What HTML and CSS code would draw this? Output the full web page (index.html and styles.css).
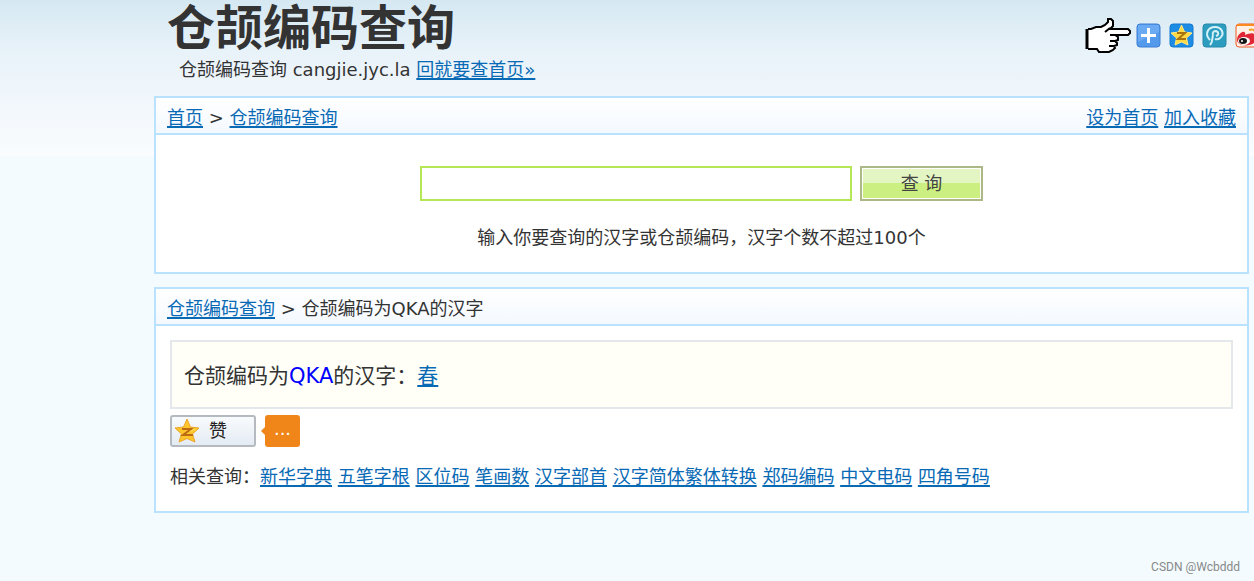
FILE: index.html
```
<!DOCTYPE html>
<html lang="zh">
<head>
    <meta charset="UTF-8">
    <meta name="viewport" content="width=device-width, initial-scale=1.0">
    <title>仓颉编码查询</title>
    <link rel="stylesheet" href="styles.css">
</head>
<body>
    <div class="page">
        <header class="header">
            <div class="brand">
                <h1>仓颉编码查询</h1>
                <p>仓颉编码查询 cangjie.jyc.la <a href="#">回就要查首页»</a></p>
            </div>
            <div class="share">
                <svg class="hand" viewBox="0 0 46 36" aria-hidden="true">
                    <path d="M3 12H6L11 10H16L20 8L23 5V2H26L28 4V9L25 12H43L45 14V16L43 18H30L33 20V23L30 24L32 26V28L29 29L31 31V33L28 34L14 35L12 32H3Z" fill="#fff"/>
                    <path d="M3 12H6L11 10H16L20 8L23 5V2H26L28 4V9L25 12H43L45 14V16L43 18H25M30 18L33 20V23L30 24H25M30 24L32 26V28L29 29H24M29 29L30 31L28 33L24 35H14L12 32H3" fill="none" stroke="#000" stroke-width="2"/>
                    <path d="M2 12V32" fill="none" stroke="#000" stroke-width="3"/>
                    <path d="M25 11L20 15" fill="none" stroke="#000" stroke-width="2"/>
                </svg>
                <a href="#" aria-label="分享">
                    <svg viewBox="0 0 25 25">
                        <rect x="1" y="1" width="23" height="23" rx="3" fill="#539aec" stroke="#3d7ed3"/>
                        <path d="M2 2H23V9L2 19Z" fill="#6aaaf2"/>
                        <path d="M12.500 5V20M5 12.500H20" stroke="#fff" stroke-width="3"/>
                    </svg>
                </a>
                <a href="#" aria-label="QQ空间">
                    <svg viewBox="0 0 25 25">
                        <rect x="1" y="1" width="23" height="23" rx="3" fill="#1d8ce4" stroke="#1678cf"/>
                        <path d="M12.500 2L15.500 9L23 10L17.500 15L19 22L12.500 19L6 22L7.500 15L2 10L9.500 9Z" fill="#ffd944" stroke="#ffe884"/>
                        <path d="M8 10H16L9 16H17" fill="none" stroke="#a87211" stroke-width="2"/>
                    </svg>
                </a>
                <a href="#" aria-label="腾讯朋友">
                    <svg viewBox="0 0 25 25">
                        <rect x="1" y="1" width="23" height="23" rx="3" fill="#2c9dbf" stroke="#2489ab"/>
                        <path d="M8 17C2 11 6 4 13 4C20 4 23 11 18 15C16 17 13 16 13 16M8 22C11 19 10 15 11 12" fill="none" stroke="#d4f1f7" stroke-width="2"/>
                        <path d="M11 12C10 9 12 8 14 8C17 9 17 12 14 13" fill="none" stroke="#d4f1f7" stroke-width="2"/>
                    </svg>
                </a>
                <a href="#" aria-label="新浪微博">
                    <svg viewBox="0 0 25 25">
                        <rect x="1" y="1" width="23" height="23" rx="3" fill="#fff1e5" stroke="#ed5b24"/>
                        <path d="M2 2H23" stroke="#ff8a1f" stroke-width="2"/>
                        <path d="M2 17C2 12 7 8 9 9C11 9 10 12 10 12C15 10 20 9 19 13C23 14 22 18 19 20C14 24 2 23 2 17Z" fill="#e02735"/>
                        <ellipse cx="9" cy="18" rx="6" ry="4" fill="#fff"/>
                        <ellipse cx="8" cy="18" rx="4" ry="3" fill="#151515"/>
                        <circle cx="7" cy="18" r="1" fill="#fff"/>
                        <path d="M14 7C19 5 22 9 20 14" fill="none" stroke="#f7a229" stroke-width="2"/>
                    </svg>
                </a>
            </div>
        </header>

        <section class="panel">
            <div class="panel-head">
                <div><a href="#">首页</a> &gt; <a href="#">仓颉编码查询</a></div>
                <div><a href="#">设为首页</a> <a href="#">加入收藏</a></div>
            </div>
            <form class="search">
                <div class="search-row">
                    <input type="text" id="q" aria-label="汉字或仓颉编码">
                    <button type="submit">查 询</button>
                </div>
                <label for="q">输入你要查询的汉字或仓颉编码，汉字个数不超过100个</label>
            </form>
        </section>

        <section class="panel">
            <div class="panel-head">
                <div><a href="#">仓颉编码查询</a> &gt; 仓颉编码为QKA的汉字</div>
            </div>
            <div class="content">
                <div class="result">仓颉编码为<span class="code">QKA</span>的汉字：<a href="#">春</a></div>
                <div class="like">
                    <button type="button" class="like-btn">
                        <svg viewBox="0 0 26 26" aria-hidden="true">
                            <path d="M13 1L16.500 9L25 10L18.500 16L21 24L13 20.500L5 24L7.500 16L1 10L9.500 9Z" fill="#ffc52b" stroke="#eda62b"/>
                            <path d="M13 3L15 10L23 11L16 14Z" fill="#ffdc57"/>
                            <path d="M8 11H17L9 17H19" fill="none" stroke="#bd6b12" stroke-width="2"/>
                        </svg>
                        赞
                    </button>
                    <span class="bubble">...</span>
                </div>
                <div class="related">相关查询：<a href="#">新华字典</a> <a href="#">五笔字根</a> <a href="#">区位码</a> <a href="#">笔画数</a> <a href="#">汉字部首</a> <a href="#">汉字简体繁体转换</a> <a href="#">郑码编码</a> <a href="#">中文电码</a> <a href="#">四角号码</a></div>
            </div>
        </section>

        <footer class="footer">CSDN @Wcbddd</footer>
    </div>
</body>
</html>
```

FILE: styles.css
```
* {
    box-sizing: border-box;
}

body {
    margin: 0;
    font-family: "DejaVu Sans", "Noto Sans CJK SC", sans-serif;
    font-size: 18px;
    line-height: 28px;
    color: #333;
    background: #f3fbff linear-gradient(#d5e8f2, #e8f2f9 50px, #fafcfe 156px) no-repeat 0 0 / 100% 156px;
    overflow-x: hidden;
}

a {
    color: #0869b5;
    text-decoration: underline;
    text-decoration-thickness: 2px;
    text-underline-offset: 2px;
}

.page {
    padding: 0 5px 0 154px;
}

.header {
    display: flex;
    justify-content: space-between;
    height: 96px;
    padding-left: 13px;
}

.brand h1 {
    margin: 0;
    font-size: 48px;
    line-height: 56px;
}

.brand p {
    margin: 0 0 0 12px;
}

/* the last icon runs past the right edge of the window */
.share {
    display: flex;
    align-items: flex-start;
    gap: 8px;
    margin-right: -11px;
    padding-top: 23px;
}

.share a,
.share a svg {
    display: block;
    width: 25px;
    height: 25px;
}

.share .hand {
    width: 46px;
    height: 36px;
    margin: -6px -3px 0 0;
}

.panel {
    margin-bottom: 13px;
    border: 2px solid #b9e2ff;
    background: #fff;
}

.panel-head {
    display: flex;
    justify-content: space-between;
    height: 37px;
    padding: 6px 11px 0;
    border-bottom: 2px solid #b9e2ff;
    background: linear-gradient(#fff, #f4f9ff);
}

.search {
    display: flex;
    flex-direction: column;
    align-items: center;
    gap: 23px;
    padding: 31px 10px 20px;
}

.search-row {
    display: flex;
    justify-content: center;
    gap: 8px;
    width: 100%;
}

.search input {
    width: 432px;
    height: 35px;
    padding: 0 8px;
    border: 2px solid #b5e655;
    background: #fff;
    font: inherit;
}

.search button {
    width: 123px;
    height: 35px;
    padding: 0;
    border: 2px solid #acb986;
    background: linear-gradient(#e2f5c2 50%, #ccef81 50%);
    box-shadow: inset 0 0 0 1px #fff;
    color: #444;
    font: inherit;
}

.content {
    padding: 14px 14px 20px;
}

.result {
    padding: 22px 12px 18px;
    border: 2px solid #e4e8eb;
    background: #fffff7;
    font-size: 21px;
    line-height: 25px;
}

.code {
    color: #00f;
}

.like {
    display: flex;
    gap: 9px;
    margin: 6px 0 16px;
}

.like-btn {
    display: flex;
    align-items: center;
    gap: 9px;
    width: 86px;
    height: 32px;
    padding: 0 2px;
    border: 2px solid #b4babf;
    border-radius: 3px;
    background: linear-gradient(#f8fbfd, #e4ebf3);
    color: #222;
    font: inherit;
}

.like-btn svg {
    width: 26px;
    height: 26px;
}

.bubble {
    position: relative;
    width: 35px;
    height: 32px;
    border-radius: 3px;
    background: #f08519;
    color: #fff;
    text-align: center;
}

.bubble::before {
    content: "";
    position: absolute;
    top: 11px;
    left: -4px;
    border: 5px solid transparent;
    border-left: 0;
    border-right-color: #f08519;
}

.footer {
    padding: 27px 9px 0 0;
    font-family: Roboto, sans-serif;
    font-size: 12px;
    color: #888;
    text-align: right;
}
```
